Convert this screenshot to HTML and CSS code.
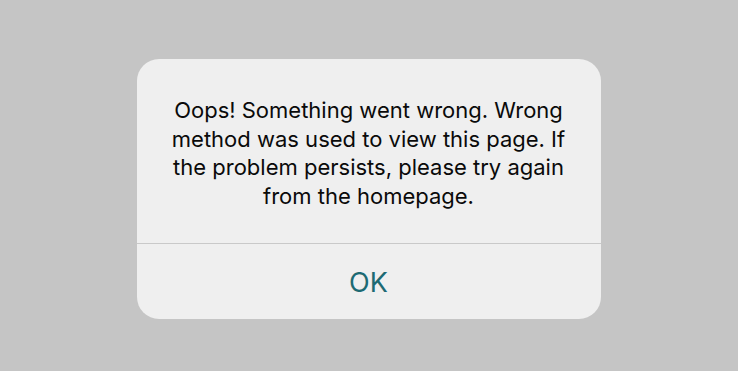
FILE: index.html
```html
<!DOCTYPE html>
<html>
<head>
<meta charset="utf-8">
<link rel="stylesheet" href="styles.css">
</head>
<body>
<div class="screen">
  <div class="dialog">
    <p class="message">Oops! Something went wrong. Wrong method was used to view this page. If the problem persists, please try again from the homepage.</p>
    <div class="actions">
      <button class="ok">OK</button>
    </div>
  </div>
</div>
</body>
</html>
```
FILE: styles.css
```css
html, body {
  margin: 0;
  padding: 0;
  background: #c5c5c5;
}
.screen {
  width: 738px;
  height: 371px;
  display: flex;
  justify-content: center;
  padding-top: 59px;
  box-sizing: border-box;
}
.dialog {
  width: 464px;
  height: 260px;
  margin-left: -1px;
  background: #efefef;
  border-radius: 22px;
  display: flex;
  flex-direction: column;
  overflow: hidden;
}
.message {
  margin: 0;
  height: 185px;
  box-sizing: border-box;
  padding: 37px 30px 0;
  font-family: Inter, "Liberation Sans", sans-serif;
  font-size: 22px;
  line-height: 28.5px;
  color: #0a0a0a;
  text-align: center;
  border-bottom: 1px solid #c9c9c9;
}
.actions {
  flex: 1;
  display: flex;
  align-items: center;
  justify-content: center;
}
.ok {
  border: none;
  background: none;
  font-family: Inter, "Liberation Sans", sans-serif;
  font-size: 27px;
  color: #1d6a73;
  padding: 0;
  margin-top: 2px;
}
```
